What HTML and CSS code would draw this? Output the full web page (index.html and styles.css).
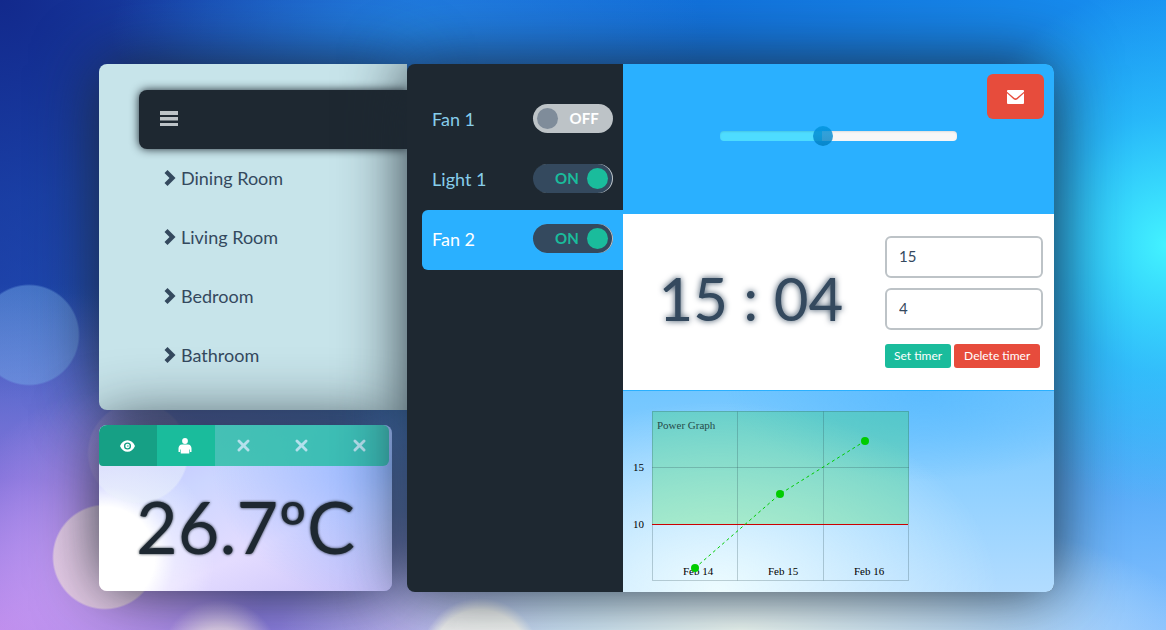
FILE: index.html
```html
<!DOCTYPE html>
<html lang="en">
<head>
<meta charset="utf-8">
<title>Home control</title>
<link rel="stylesheet" href="styles.css">
</head>
<body>
<svg class="symbols" aria-hidden="true">
  <symbol id="chevron" viewBox="0 0 12 16"><path d="M3.500 0 11.500 8 3.500 16 .5 13 5.500 8 .5 3z"/></symbol>
  <symbol id="cross" viewBox="0 0 12 12"><path d="M1.800 1.800 10.200 10.200M10.200 1.800 1.800 10.200" fill="none" stroke="currentColor" stroke-width="2.600" stroke-linecap="round"/></symbol>
</svg>
<main class="board">
  <div class="side">
    <nav class="rooms" aria-label="Rooms">
      <div class="rooms-head">
        <button class="menu" type="button" aria-label="Menu">
          <svg width="18" height="15" viewBox="0 0 18 15"><path d="M0 0h18v4H0zM0 6h18v3.500H0zM0 12h18v3H0z"/></svg>
        </button>
      </div>
      <a class="room" href="#dining"><svg width="12" height="16"><use href="#chevron"/></svg>Dining Room</a>
      <a class="room" href="#living"><svg width="12" height="16"><use href="#chevron"/></svg>Living Room</a>
      <a class="room" href="#bedroom"><svg width="12" height="16"><use href="#chevron"/></svg>Bedroom</a>
      <a class="room" href="#bathroom"><svg width="12" height="16"><use href="#chevron"/></svg>Bathroom</a>
    </nav>
    <section class="climate">
      <div class="tabs">
        <button class="tab tab-current" type="button" aria-label="View"><svg width="15" height="12" viewBox="0 0 15 12"><path fill-rule="evenodd" d="M0 6C1.500 2.300 4.300.2 7.500.2S13.500 2.300 15 6c-1.500 3.700-4.300 5.800-7.500 5.800S1.500 9.700 0 6zM7.500 2.400a3.600 3.600 0 1 0 0 7.200 3.600 3.600 0 1 0 0-7.200z"/><path fill-rule="evenodd" d="M7.500 3.800a2.200 2.200 0 1 0 0 4.400 2.200 2.200 0 1 0 0-4.400zM7.500 5a1 1 0 1 1 0 2z"/></svg></button>
        <button class="tab tab-on" type="button" aria-label="Presence"><svg width="14" height="16" viewBox="0 0 14 16"><circle cx="7" cy="3" r="2.900"/><path d="M4 6.500h6c2.200 0 3.500 1.800 3.500 4V14h-1.600v-2.500h-.6v4H2.700v-4h-.6V14H.5v-3.500c0-2.200 1.300-4 3.500-4z"/></svg></button>
        <button class="tab" type="button" aria-label="Sensor 3"><svg width="13" height="13"><use href="#cross"/></svg></button>
        <button class="tab" type="button" aria-label="Sensor 4"><svg width="13" height="13"><use href="#cross"/></svg></button>
        <button class="tab" type="button" aria-label="Sensor 5"><svg width="13" height="13"><use href="#cross"/></svg></button>
      </div>
      <p class="temperature">26.7ºC</p>
    </section>
  </div>
  <div class="panel">
    <section class="devices">
      <label class="device">Fan 1<span class="switch"><input type="checkbox"><span class="state">OFF</span></span></label>
      <label class="device">Light 1<span class="switch"><input type="checkbox" checked><span class="state">ON</span></span></label>
      <label class="device device-active">Fan 2<span class="switch"><input type="checkbox" checked><span class="state">ON</span></span></label>
    </section>
    <div class="detail">
      <section class="speed">
        <input class="slider" type="range" min="0" max="100" value="43" aria-label="Speed">
        <button class="mail" type="button" aria-label="Messages"><svg width="17" height="14" viewBox="0 0 17 14"><path d="M0 3.200 6.600 9.200q1.900 1.400 3.800 0L17 3.200V13q0 1-1 1H1q-1 0-1-1zM1 0h15q1 0 1 1v.7L9.900 7.800q-1.400 1-2.800 0L0 1.700V1q0-1 1-1z"/></svg></button>
      </section>
      <section class="timer">
        <p class="clock">15 : 04</p>
        <form class="timer-form">
          <input class="field" type="text" value="15" aria-label="Hours">
          <input class="field" type="text" value="4" aria-label="Minutes">
          <div class="actions">
            <button class="button button-set" type="button">Set timer</button>
            <button class="button button-delete" type="button">Delete timer</button>
          </div>
        </form>
      </section>
      <section class="graph">
        <svg class="chart" width="300" height="201" viewBox="0 0 300 201" role="img" aria-label="Power Graph">
          <rect class="zone" x="29" y="20" width="257" height="113"/>
          <path class="grid" d="M29.500 20.500h256v169h-256zM114.500 20.500v169M200.500 20.500v169M29 76.500h257"/>
          <path class="limit" d="M29 133.500h256"/>
          <text x="34" y="38" class="title">Power Graph</text>
          <text x="21" y="80" text-anchor="end">15</text>
          <text x="21" y="137" text-anchor="end">10</text>
          <text x="75" y="184" text-anchor="middle">Feb 14</text>
          <text x="160" y="184" text-anchor="middle">Feb 15</text>
          <text x="246" y="184" text-anchor="middle">Feb 16</text>
          <path class="trend" d="M72 177 157 103 242 50"/>
          <g class="points"><circle cx="72" cy="177" r="4"/><circle cx="157" cy="103" r="4"/><circle cx="242" cy="50" r="4"/></g>
        </svg>
      </section>
    </div>
  </div>
</main>
</body>
</html>
```
FILE: styles.css
```css
* { box-sizing: border-box; }

body {
  margin: 0;
  min-height: 100vh;
  padding: 64px 112px 38px 99px;
  font-family: Lato, sans-serif;
  color: #34495e;
  background:
    radial-gradient(circle at 29px 335px, rgba(120, 175, 235, .45) 49px, transparent 51px),
    radial-gradient(circle at 138px 453px, rgba(215, 190, 230, .2) 49px, transparent 51px),
    radial-gradient(circle at 105px 557px, rgba(255, 235, 230, .65) 51px, transparent 53px),
    radial-gradient(circle at 480px 658px, rgba(255, 255, 246, .85) 48px, transparent 60px),
    radial-gradient(circle at 220px 660px, rgba(255, 240, 240, .7) 32px, transparent 60px),
    radial-gradient(ellipse 160px 170px at 110px 560px, rgba(215, 170, 255, .75), transparent),
    radial-gradient(ellipse 460px 130px at 740px 100%, #f4fffa, rgba(225, 240, 245, .7) 45%, transparent),
    radial-gradient(ellipse 230px 260px at 100% 245px, #43f2ff, rgba(50, 210, 255, .6) 50%, transparent),
    radial-gradient(ellipse 560px 340px at 0 100%, #bc8aea, rgba(135, 105, 215, .8) 45%, transparent),
    radial-gradient(ellipse 200px 120px at 400px 100%, rgba(195, 180, 255, .9), transparent),
    radial-gradient(ellipse 300px 110px at 410px 30px, rgba(35, 135, 230, .8), transparent),
    radial-gradient(ellipse 420px 400px at 0 0, #12298c, rgba(20, 55, 155, .6) 50%, transparent),
    linear-gradient(180deg, transparent 45%, rgba(140, 195, 255, .95)),
    linear-gradient(90deg, #2248b0, #1d68d6 35%, #1272dc 60%, #1891f2);
}

button, input { font-family: inherit; color: inherit; }
button { border: 0; padding: 0; cursor: pointer; }
svg { display: block; fill: currentColor; }
p { margin: 0; }

.symbols { position: absolute; width: 0; height: 0; }

.board {
  display: grid;
  grid-template-columns: 10fr 21fr;
}

.side {
  display: flex;
  flex-direction: column;
  gap: 15px;
}

.rooms, .climate, .panel { box-shadow: 0 0 65px rgba(30, 40, 49, .95); }

.rooms {
  padding: 26px 0 25px 40px;
  background: #c7e4ea;
  border-radius: 8px 0 0 8px;
}

.rooms-head {
  display: flex;
  align-items: center;
  height: 59px;
  padding: 0 0 2px 21px;
  background: #1e2831;
  border-radius: 8px 0 0 8px;
  box-shadow: 0 0 10px #1e2831;
}

.menu { background: none; color: #bdc3c7; }

.room {
  display: flex;
  align-items: center;
  gap: 5px;
  height: 59px;
  padding: 0 0 2px 25px;
  font-size: 18px;
  color: #34495e;
  text-decoration: none;
}

.climate {
  margin-right: 15px;
  padding-bottom: 9px;
  overflow: hidden;
  border-radius: 8px;
  background:
    radial-gradient(circle at 39px 28px, rgba(235, 242, 250, .5) 49px, transparent 51px),
    radial-gradient(circle at 6px 132px, #fff 50px, rgba(255, 255, 255, .4) 70px, transparent 110px),
    radial-gradient(ellipse 180px 140px at 100% 25%, #8fb4ff, transparent),
    linear-gradient(155deg, #bcb8ff, #ccd6ff 35%, #e4dcff 65%, #c8c0fa);
}

.tabs {
  display: flex;
  margin-right: 3px;
  border-radius: 6px 6px 6px 4px;
  overflow: hidden;
}

.tab {
  display: flex;
  flex: 1;
  align-items: center;
  justify-content: center;
  height: 41px;
  padding-right: 2px;
  background: rgba(26, 188, 156, .75);
  color: rgba(220, 235, 255, .75);
}

.tab-current { background: #16a085; color: #fff; }
.tab-on { background: #1abc9c; color: #fff; }

.temperature {
  padding: 20px 0 16px;
  font-size: 72px;
  line-height: 80px;
  text-align: center;
  color: #1e2831;
  text-shadow: 0 0 3px #1e2831;
}

.panel {
  position: relative;
  display: grid;
  grid-template-columns: 1fr 2fr;
  border-radius: 8px;
  overflow: hidden;
  background: #1e2831;
}

.devices { padding: 26px 0 0 15px; }

.device {
  display: flex;
  align-items: center;
  justify-content: space-between;
  height: 60px;
  padding: 0 10px 3px;
  border-radius: 6px 0 0 6px;
  font-size: 18px;
  line-height: 20px;
  color: #87ceeb;
}

.device-active { background: #2ab0ff; color: #fff; }

.switch { position: relative; display: flex; }

.switch input {
  display: flex;
  appearance: none;
  width: 80px;
  height: 29px;
  margin: 0;
  padding: 4px;
  border-radius: 15px;
  background: #bdc3c7;
}

.switch input::before {
  content: "";
  width: 21px;
  height: 21px;
  border-radius: 50%;
  background: #7f8c9a;
}

.switch input:checked {
  justify-content: flex-end;
  padding-right: 5px;
  background: #34495e;
  box-shadow: inset -1px 0 #bdc3c7;
}

.switch input:checked::before { background: #1abc9c; }

.state {
  position: absolute;
  top: 0;
  right: 14px;
  font-size: 15px;
  font-weight: 700;
  line-height: 29px;
  color: #fff;
  pointer-events: none;
}

.switch input:checked + .state { right: 34px; color: #1abc9c; }

.speed {
  position: relative;
  height: 150px;
  padding-top: 67px;
  background: #2ab0ff;
}

.slider {
  display: block;
  appearance: none;
  width: 55%;
  height: 10px;
  margin: 0 auto;
  border-radius: 4px;
  background: linear-gradient(90deg, #4edcff 43%, #f7f7f7 43%);
  box-shadow: inset 0 1px 2px rgba(0, 0, 0, .1);
}

.slider::-webkit-slider-thumb {
  appearance: none;
  width: 20px;
  height: 20px;
  border-radius: 50%;
  background: linear-gradient(rgba(0, 148, 222, .8), rgba(0, 124, 190, .8));
}

.mail {
  position: absolute;
  top: 10px;
  right: 10px;
  display: flex;
  align-items: center;
  justify-content: center;
  width: 57px;
  height: 45px;
  border-radius: 6px;
  background: #e74c3c;
  color: #fff;
}

.timer {
  display: flex;
  align-items: flex-start;
  gap: 6px;
  height: 176px;
  padding: 22px 11px 22px 0;
  background: #fff;
}

.clock {
  flex: 1;
  padding-top: 22px;
  font-size: 60px;
  line-height: 80px;
  text-align: center;
  text-shadow: 0 0 6px #34495e;
}

.timer-form { width: 158px; }

.field {
  display: block;
  width: 100%;
  height: 42px;
  margin-bottom: 10px;
  padding: 0 12px 2px;
  border: 2px solid #bdc3c7;
  border-radius: 6px;
  background: #fff;
  font-size: 15px;
}

.actions { display: flex; gap: 3px; padding-top: 4px; }

.button {
  height: 24px;
  padding: 0 9px 1px;
  border-radius: 3px;
  font-size: 12px;
  color: #fff;
  white-space: nowrap;
}

.button-set { background: #1abc9c; }
.button-delete { padding: 0 10px 1px; background: #e74c3c; }

.graph {
  border-top: 1px solid #2ab0ff;
  background:
    radial-gradient(ellipse 280px 190px at 22% 100%, #edfcff, transparent),
    radial-gradient(ellipse 200px 90px at 70% 0, #5cbcff, transparent),
    linear-gradient(180deg, #72c6ff, #b2dcff);
}

.chart {
  font-family: "Liberation Serif", serif;
  font-size: 11px;
  fill: #000;
}

.zone { fill: rgba(40, 225, 50, .25); }
.grid { fill: none; stroke: rgba(40, 70, 80, .25); }
.limit { stroke: #c00; }
.title { fill: #264b4b; }
.trend { fill: none; stroke: #0c0; stroke-dasharray: 3 3; }
.points { fill: #0c0; }
```
